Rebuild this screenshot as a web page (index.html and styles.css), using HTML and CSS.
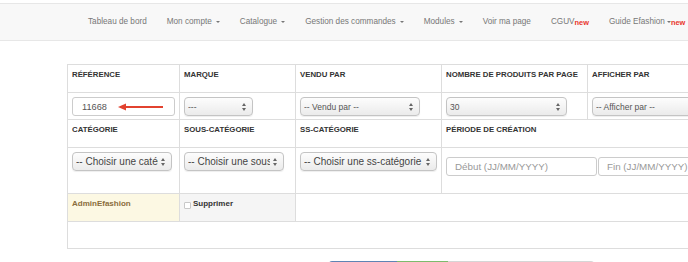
FILE: index.html
```html
<!DOCTYPE html>
<html lang="fr">
<head>
<meta charset="utf-8">
<title>Produits</title>
<link rel="stylesheet" href="styles.css">
</head>
<body>
<nav class="navbar">
  <ul class="nav">
    <li><a class="nav-link" href="#">Tableau de bord</a></li>
    <li><a class="nav-link" href="#">Mon compte<span class="caret"></span></a></li>
    <li><a class="nav-link" href="#">Catalogue<span class="caret"></span></a></li>
    <li><a class="nav-link" href="#">Gestion des commandes<span class="caret"></span></a></li>
    <li><a class="nav-link" href="#">Modules<span class="caret"></span></a></li>
    <li><a class="nav-link" href="#">Voir ma page</a></li>
    <li><a class="nav-link" href="#">CGUV<span class="new">new</span></a></li>
    <li><a class="nav-link" href="#">Guide Efashion<span class="caret caret-tight"></span><span class="new">new</span></a></li>
  </ul>
</nav>

<main class="content">
  <table class="filters">
    <colgroup>
      <col class="c1"><col class="c2"><col class="c3"><col class="c4"><col class="c5">
    </colgroup>
    <tr class="row-head">
      <th>Référence</th>
      <th>Marque</th>
      <th>Vendu par</th>
      <th>Nombre de produits par page</th>
      <th>Afficher par</th>
    </tr>
    <tr class="row-ctrl">
      <td>
        <div class="ref-wrap">
          <input class="text-input w-ref" type="text" value="11668">
          <svg class="annot-arrow" width="46" height="8" viewBox="0 0 46 8" aria-hidden="true">
            <polygon points="0,4 8,0.6 8,7.4" fill="#e2422f"/>
            <line x1="7" y1="4" x2="45" y2="4" stroke="#e2422f" stroke-width="2.2"/>
          </svg>
        </div>
      </td>
      <td>
        <div class="select-wrap w-68">
          <select class="select"><option>---</option></select>
          <svg class="select-arrow" width="4" height="8" viewBox="0 0 4 8"><polygon points="2,0 4,3 0,3" fill="#666"/><polygon points="0,5 4,5 2,8" fill="#666"/></svg>
        </div>
      </td>
      <td>
        <div class="select-wrap w-120">
          <select class="select"><option>-- Vendu par --</option></select>
          <svg class="select-arrow" width="4" height="8" viewBox="0 0 4 8"><polygon points="2,0 4,3 0,3" fill="#666"/><polygon points="0,5 4,5 2,8" fill="#666"/></svg>
        </div>
      </td>
      <td>
        <div class="select-wrap w-121">
          <select class="select"><option>30</option></select>
          <svg class="select-arrow" width="4" height="8" viewBox="0 0 4 8"><polygon points="2,0 4,3 0,3" fill="#666"/><polygon points="0,5 4,5 2,8" fill="#666"/></svg>
        </div>
      </td>
      <td>
        <div class="select-wrap w-121">
          <select class="select"><option>-- Afficher par --</option></select>
          <svg class="select-arrow" width="4" height="8" viewBox="0 0 4 8"><polygon points="2,0 4,3 0,3" fill="#666"/><polygon points="0,5 4,5 2,8" fill="#666"/></svg>
        </div>
      </td>
    </tr>
    <tr class="row-head">
      <th>Catégorie</th>
      <th>Sous-catégorie</th>
      <th>Ss-catégorie</th>
      <th colspan="2">Période de création</th>
    </tr>
    <tr class="row-ctrl2">
      <td>
        <div class="select-wrap w-100">
          <select class="select select-lg"><option>-- Choisir une catégorie --</option></select>
          <svg class="select-arrow" width="4" height="8" viewBox="0 0 4 8"><polygon points="2,0 4,3 0,3" fill="#666"/><polygon points="0,5 4,5 2,8" fill="#666"/></svg>
        </div>
      </td>
      <td>
        <div class="select-wrap w-100">
          <select class="select select-lg"><option>-- Choisir une sous-catégorie --</option></select>
          <svg class="select-arrow" width="4" height="8" viewBox="0 0 4 8"><polygon points="2,0 4,3 0,3" fill="#666"/><polygon points="0,5 4,5 2,8" fill="#666"/></svg>
        </div>
      </td>
      <td>
        <div class="select-wrap w-137">
          <select class="select select-lg"><option>-- Choisir une ss-catégorie</option></select>
          <svg class="select-arrow" width="4" height="8" viewBox="0 0 4 8"><polygon points="2,0 4,3 0,3" fill="#666"/><polygon points="0,5 4,5 2,8" fill="#666"/></svg>
        </div>
      </td>
      <td colspan="2">
        <div class="date-range">
          <input class="text-input date-input" type="text" placeholder="Début (JJ/MM/YYYY)">
          <input class="text-input date-input" type="text" placeholder="Fin (JJ/MM/YYYY)">
        </div>
      </td>
    </tr>
    <tr class="row-user">
      <td class="cell-warning">AdminEfashion</td>
      <td class="cell-muted"><label class="check"><span class="checkbox"></span>Supprimer</label></td>
      <td colspan="3"></td>
    </tr>
    <tr class="row-empty">
      <td colspan="5"></td>
    </tr>
  </table>

  <div class="progress">
    <div class="seg seg-blue"></div>
    <div class="seg seg-green"></div>
    <div class="seg seg-gray"></div>
  </div>
</main>
</body>
</html>
```

FILE: styles.css
```css
html, body {
  margin: 0;
  padding: 0;
  overflow: hidden;
  background: #fff;
}

body {
  font-family: "Liberation Sans", Arial, sans-serif;
  color: #333;
  padding-top: 3px;
}

/* ---------- navbar ---------- */
.navbar {
  background: #f8f8f8;
  border-top: 1px solid #e7e7e7;
  border-bottom: 1px solid #e7e7e7;
  height: 36px;
  display: flex;
  align-items: center;
}

.nav {
  list-style: none;
  margin: 0;
  padding: 0 0 0 78px;
  display: flex;
  white-space: nowrap;
}

.nav-link {
  display: flex;
  align-items: center;
  padding: 0 10px;
  font-size: 8.2px;
  line-height: 12px;
  color: #777;
  text-decoration: none;
}

.caret {
  display: inline-block;
  width: 0;
  height: 0;
  margin-left: 4px;
  border-top: 2.5px solid #777;
  border-left: 2.5px solid transparent;
  border-right: 2.5px solid transparent;
}

.caret-tight {
  margin-left: 2px;
}

.new {
  color: #e8352b;
  font-weight: bold;
  font-size: 7.4px;
  position: relative;
  top: 0.5px;
}

/* ---------- table ---------- */
.content {
  padding: 23px 0 0 67px;
}

.filters {
  border-collapse: collapse;
  table-layout: fixed;
  width: 670px;
}

.c1 { width: 112px; }
.c2 { width: 116px; }
.c3 { width: 146px; }
.c4 { width: 146px; }
.c5 { width: 150px; }

.filters th,
.filters td {
  border: 1px solid #ddd;
  padding: 4px 4px 0;
  vertical-align: top;
  text-align: left;
}

.filters th {
  font-size: 7.8px;
  line-height: 10px;
  font-weight: bold;
  text-transform: uppercase;
  color: #333;
  white-space: nowrap;
  padding-top: 5px;
}

.row-head { height: 28px; }
.row-ctrl { height: 27px; }
.row-ctrl2 { height: 46px; }
.row-user { height: 28px; }
.row-empty { height: 27px; }

.row-user td {
  font-size: 8px;
  line-height: 10px;
  font-weight: bold;
  padding-top: 5px;
}

.cell-warning {
  background: #fcf8e3;
  color: #8a6d3b;
}

.cell-muted {
  background: #f5f5f5;
  color: #333;
}

.check {
  display: flex;
  align-items: center;
}

.checkbox {
  width: 5px;
  height: 5px;
  border: 1px solid #c8c8c8;
  border-radius: 1px;
  background: #fff;
  margin-right: 2px;
  position: relative;
  top: 1.5px;
}

/* ---------- controls ---------- */
.text-input {
  box-sizing: border-box;
  height: 19px;
  border: 1px solid #ccc;
  border-radius: 3px;
  background: #fff;
  font-family: "Liberation Sans", Arial, sans-serif;
  color: #555;
  margin: 0;
  display: block;
}

.ref-wrap {
  position: relative;
}

.w-ref {
  width: 103px;
  font-size: 9.2px;
  padding: 0 0 0 9px;
}

.annot-arrow {
  position: absolute;
  left: 46px;
  top: 5.5px;
}

.select-wrap {
  position: relative;
  display: block;
}

.w-68 { width: 69px; }
.w-100 { width: 100px; }
.w-120 { width: 120px; }
.w-121 { width: 121px; }
.w-137 { width: 137px; }

.select {
  -webkit-appearance: none;
  appearance: none;
  box-sizing: border-box;
  width: 100%;
  height: 19px;
  margin: 0;
  border: 1px solid #c4c4c4;
  border-radius: 4px;
  background: linear-gradient(#fdfdfd, #ebebeb);
  box-shadow: 0 1px 1px rgba(0, 0, 0, 0.07);
  font-family: "Liberation Sans", Arial, sans-serif;
  font-size: 8.5px;
  color: #555;
  padding: 0 13px 0 3px;
  display: block;
}

.select-lg {
  font-size: 10px;
  color: #444;
}

.select-arrow {
  position: absolute;
  right: 7px;
  top: 5.5px;
  pointer-events: none;
}

.date-range {
  display: flex;
  gap: 1px;
  margin-top: 5px;
}

.date-input {
  width: 151px;
  flex: none;
  font-size: 9.8px;
  padding: 0 0 0 8px;
}

.date-input::placeholder {
  color: #999;
}

/* ---------- progress ---------- */
.progress {
  display: flex;
  width: 265px;
  height: 10px;
  margin: 12px 0 0 262px;
  border-radius: 3px;
  overflow: hidden;
}

.seg { height: 100%; }
.seg-blue { width: 68px; background: #5f84b4; }
.seg-green { width: 51px; background: #7dbb6c; }
.seg-gray { flex: 1; background: #d6d6d6; }
```
